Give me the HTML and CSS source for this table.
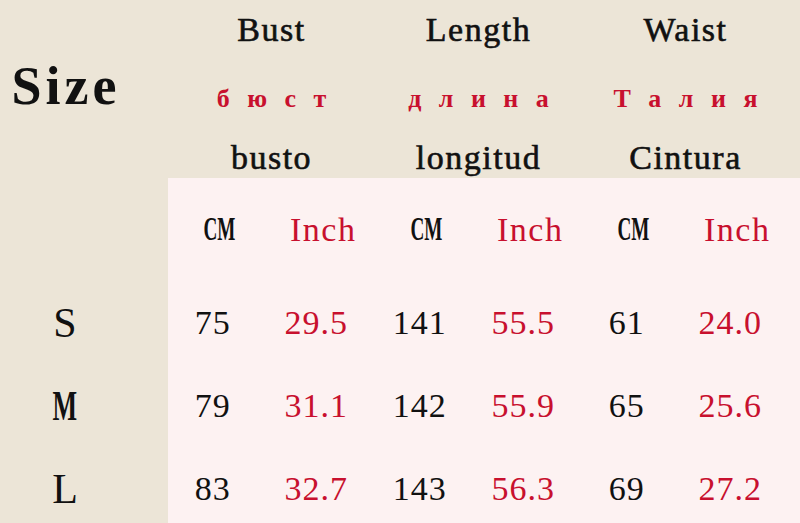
FILE: index.html
```html
<!DOCTYPE html>
<html lang="en">
<head>
<meta charset="utf-8">
<title>Size chart</title>
<link rel="stylesheet" href="styles.css">
</head>
<body>
<div class="chart">
  <div class="head">
    <div class="size-title">Size</div>
    <div class="group">
      <div class="en">Bust</div>
      <div class="ru">б ю с т</div>
      <div class="es">busto</div>
    </div>
    <div class="group">
      <div class="en">Length</div>
      <div class="ru">д л и н а</div>
      <div class="es">longitud</div>
    </div>
    <div class="group">
      <div class="en">Waist</div>
      <div class="ru">Т а л и я</div>
      <div class="es">Cintura</div>
    </div>
  </div>
  <div class="body">
    <div class="sizes">
      <div class="size-cell"></div>
      <div class="size-cell">S</div>
      <div class="size-cell"><span class="narrow">M</span></div>
      <div class="size-cell">L</div>
    </div>
    <div class="panel">
      <div class="unit cm"><span>CM</span></div>
      <div class="unit inch">Inch</div>
      <div class="unit cm"><span>CM</span></div>
      <div class="unit inch">Inch</div>
      <div class="unit cm"><span>CM</span></div>
      <div class="unit inch">Inch</div>

      <div class="num">75</div>
      <div class="num red">29.5</div>
      <div class="num">141</div>
      <div class="num red">55.5</div>
      <div class="num">61</div>
      <div class="num red">24.0</div>

      <div class="num">79</div>
      <div class="num red">31.1</div>
      <div class="num">142</div>
      <div class="num red">55.9</div>
      <div class="num">65</div>
      <div class="num red">25.6</div>

      <div class="num">83</div>
      <div class="num red">32.7</div>
      <div class="num">143</div>
      <div class="num red">56.3</div>
      <div class="num">69</div>
      <div class="num red">27.2</div>
    </div>
  </div>
</div>
</body>
</html>
```
FILE: styles.css
```css
html, body {
  margin: 0;
  padding: 0;
}
body {
  width: 800px;
  height: 523px;
  overflow: hidden;
  background: #ece5d7;
  color: #111;
  font-family: "Liberation Serif", serif;
}
.chart {
  display: flex;
  flex-direction: column;
  width: 800px;
  height: 523px;
}
.head {
  display: grid;
  grid-template-columns: 168px repeat(3, 207px);
  height: 178px;
}
.size-title {
  display: flex;
  align-items: center;
  justify-content: center;
  padding-right: 40px;
  padding-left: 4px;
  padding-bottom: 6px;
  font-weight: bold;
  font-size: 54px;
  letter-spacing: 4px;
}
.group {
  display: grid;
  grid-template-rows: 60px 78px 40px;
}
.en, .es {
  display: flex;
  align-items: center;
  justify-content: center;
  font-size: 34px;
  line-height: 1;
  letter-spacing: 1.5px;
  -webkit-text-stroke: 0.6px #111;
}
.ru {
  display: flex;
  align-items: center;
  justify-content: center;
  color: #c8102e;
  font-weight: bold;
  font-size: 26px;
  word-spacing: 11px;
}
.body {
  display: flex;
  flex: 1;
}
.sizes {
  width: 168px;
  display: grid;
  grid-template-rows: 103px repeat(3, 83px);
}
.size-cell {
  display: flex;
  align-items: center;
  justify-content: center;
  font-size: 42px;
  padding-right: 38px;
}
.narrow {
  display: inline-block;
  font-weight: bold;
  transform: scaleX(0.62);
}
.panel {
  flex: 1;
  background: #fdf2f2;
  display: grid;
  grid-template-columns: repeat(6, 103.5px);
  grid-template-rows: 103px repeat(3, 83px);
}
.unit {
  display: flex;
  align-items: center;
  justify-content: center;
}
.cm {
  font-weight: bold;
  font-size: 33px;
}
.cm span {
  display: inline-block;
  transform: scaleX(0.58);
}
.inch {
  color: #c8102e;
  font-size: 34px;
  letter-spacing: 1.5px;
}
.num {
  display: flex;
  align-items: center;
  justify-content: center;
  padding-right: 14px;
  font-size: 34px;
  letter-spacing: 1px;
}
.red {
  color: #c8102e;
}
```
